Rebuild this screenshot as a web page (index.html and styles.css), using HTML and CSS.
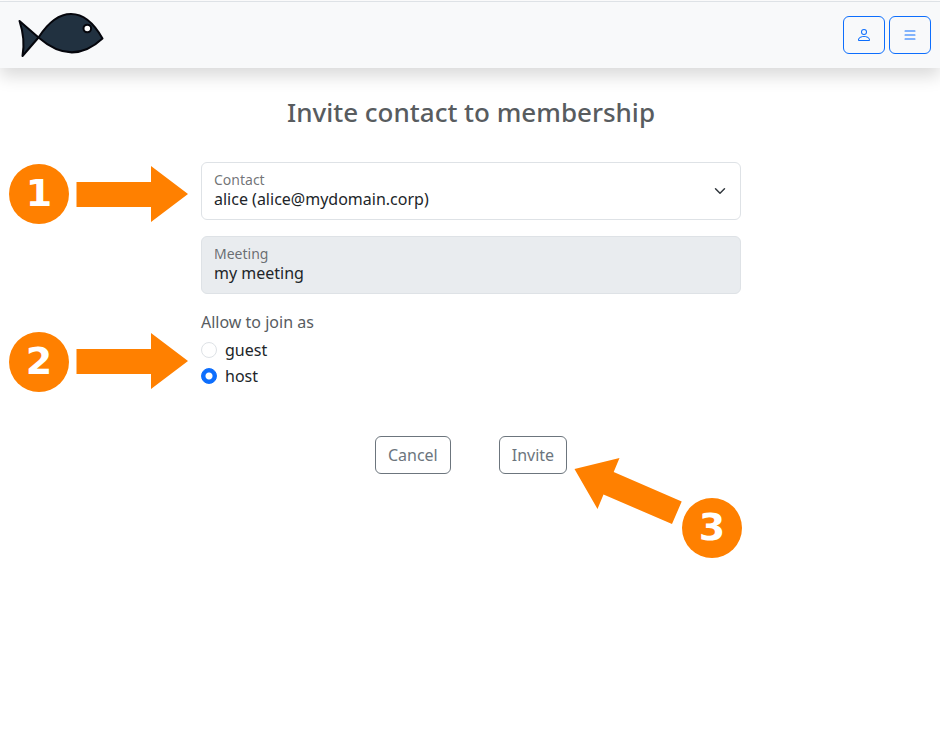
FILE: index.html
```html
<!DOCTYPE html>
<html lang="en">
<head>
<meta charset="utf-8">
<meta name="viewport" content="width=device-width, initial-scale=1">
<title>Invite contact to membership</title>
<link rel="stylesheet" href="styles.css">
</head>
<body>
<header class="navbar">
  <a class="brand" href="#" aria-label="Home">
    <svg width="88" height="48" viewBox="0 0 88 48" fill="#213140" stroke="#05060c" stroke-width="2" stroke-linejoin="round" aria-hidden="true">
      <path d="M2.500 11 21.500 27.500 5.500 46Q8.500 29 2.500 11Z"/>
      <path d="M21.500 27.500C41.500-3.500 67-4.500 85.500 28.500C65.500 47 44.500 47.500 21.500 27.500Z"/>
      <circle cx="70.300" cy="18.500" r="3.800" fill="#fff"/>
    </svg>
  </a>
  <div class="nav-actions">
    <button class="btn btn-primary" type="button" aria-label="Account">
      <svg width="16" height="16" viewBox="0 0 16 16" fill="currentColor" aria-hidden="true"><path d="M8 8a3 3 0 1 0 0-6 3 3 0 0 0 0 6m2-3a2 2 0 1 1-4 0 2 2 0 0 1 4 0m4 8c0 1-1 1-1 1H3s-1 0-1-1 1-4 6-4 6 3 6 4m-1-.004c-.001-.246-.154-.986-.832-1.664C11.516 10.680 10.289 10 8 10s-3.516.68-4.168 1.332c-.678.678-.83 1.418-.832 1.664z"/></svg>
    </button>
    <button class="btn btn-primary" type="button" aria-label="Menu">
      <svg width="16" height="16" viewBox="0 0 16 16" fill="currentColor" aria-hidden="true"><path fill-rule="evenodd" d="M2.500 12a.5.5 0 0 1 .5-.5h10a.5.5 0 0 1 0 1H3a.5.5 0 0 1-.5-.5m0-4a.5.5 0 0 1 .5-.5h10a.5.5 0 0 1 0 1H3a.5.5 0 0 1-.5-.5m0-4a.5.5 0 0 1 .5-.5h10a.5.5 0 0 1 0 1H3a.5.5 0 0 1-.5-.5"/></svg>
    </button>
  </div>
</header>
<main class="page">
  <h1 class="title">Invite contact to membership</h1>
  <form class="form">
    <div class="field">
      <select class="control select" id="contact">
        <option>alice (alice@mydomain.corp)</option>
      </select>
      <label class="field-label" for="contact">Contact</label>
      <div class="callout callout-right callout-contact">
        <span class="step">1</span>
        <svg width="112" height="56" viewBox="0 0 112 56" fill="#ff8000" aria-hidden="true"><path d="M.5 16H75V0L112 28 75 56V41H.5Z"/></svg>
      </div>
    </div>
    <div class="field">
      <input class="control" id="meeting" type="text" value="my meeting" disabled>
      <label class="field-label" for="meeting">Meeting</label>
    </div>
    <fieldset class="roles">
      <legend class="legend">Allow to join as</legend>
      <div class="check">
        <input class="radio" type="radio" name="role" id="guest">
        <label for="guest">guest</label>
      </div>
      <div class="check">
        <input class="radio" type="radio" name="role" id="host" checked>
        <label for="host">host</label>
      </div>
      <div class="callout callout-right callout-roles">
        <span class="step">2</span>
        <svg class="arrow" width="112" height="56" viewBox="0 0 112 56" fill="#ff8000" aria-hidden="true"><path d="M.5 15H75V-1L112 27 75 55V40H.5Z"/></svg>
      </div>
    </fieldset>
    <div class="actions">
      <button class="btn btn-secondary" type="button">Cancel</button>
      <button class="btn btn-secondary" type="submit">Invite</button>
      <div class="callout callout-invite">
        <svg width="108" height="68" viewBox="0 0 108 68" fill="#ff8000" aria-hidden="true"><path d="M.5 11 45.500 0 39.700 14 107.700 43.500 98 66 29.500 36.500 23.500 51Z"/></svg>
        <span class="step">3</span>
      </div>
    </div>
  </form>
</main>
</body>
</html>
```
FILE: styles.css
```css
*,
*::before,
*::after {
  box-sizing: border-box;
}

body {
  min-height: 100vh;
  margin: 0;
  padding-top: 1px;
  background: #fff;
  color: #212529;
  font-family: "Noto Sans", "Liberation Sans", sans-serif;
  font-size: 16px;
  line-height: 24px;
}

.navbar {
  display: flex;
  align-items: center;
  justify-content: space-between;
  padding: 8px 9px 8px 17px;
  border-top: 1px solid #dee2e6;
  background: #f8f9fa;
  box-shadow: 0 8px 16px rgba(0, 0, 0, 0.15);
}

.brand {
  display: flex;
  height: 50px;
}

.nav-actions {
  display: flex;
  gap: 4px;
}

.btn {
  padding: 6px 12px;
  border: 1px solid;
  border-radius: 6px;
  background: transparent;
  font: inherit;
  cursor: pointer;
}

.btn-primary {
  display: flex;
  align-items: center;
  height: 38px;
  color: #0d6efd;
}

.btn-secondary {
  color: #6c757d;
}

.page {
  padding: 28px 0 24px 2px;
}

.title {
  margin: 0 0 34px;
  color: #585c5f;
  font-size: 26px;
  font-weight: 500;
  line-height: 32px;
  text-align: center;
}

.form {
  max-width: 540px;
  margin: 0 auto;
}

.field {
  position: relative;
  margin-bottom: 16px;
}

.control {
  display: block;
  width: 100%;
  height: 58px;
  padding: 26px 12px 10px;
  border: 1px solid #dee2e6;
  border-radius: 6px;
  background-color: #fff;
  color: #212529;
  font: inherit;
  line-height: 20px;
  appearance: none;
}

.control:disabled {
  background-color: #e9ecef;
  opacity: 1;
}

.select {
  background-image: url("data:image/svg+xml,%3csvg xmlns='http://www.w3.org/2000/svg' viewBox='0 0 16 16'%3e%3cpath fill='none' stroke='%23343a40' stroke-linecap='round' stroke-linejoin='round' stroke-width='2' d='m2 5 6 6 6-6'/%3e%3c/svg%3e");
  background-repeat: no-repeat;
  background-position: right 12px center;
  background-size: 16px 12px;
}

.field-label {
  position: absolute;
  top: 8px;
  left: 13px;
  color: rgba(33, 37, 41, 0.65);
  font-size: 14px;
  line-height: 20px;
  pointer-events: none;
}

.roles {
  position: relative;
  min-width: 0;
  margin: 0 0 46px;
  padding: 0;
  border: 0;
}

.legend {
  margin-bottom: 4px;
  padding: 0;
  color: #585c5f;
}

.check {
  display: flex;
  align-items: center;
  gap: 8px;
  margin-bottom: 2px;
}

.radio {
  width: 16px;
  height: 16px;
  margin: 0;
  border: 1px solid #dee2e6;
  border-radius: 50%;
  background: #fff;
  appearance: none;
}

.radio:checked {
  border-color: #0d6efd;
  background: radial-gradient(circle, #fff 3px, #0d6efd 4px);
}

.actions {
  position: relative;
  display: flex;
  justify-content: center;
  gap: 48px;
}

/* Numbered step markers laid over the form */
.callout {
  position: absolute;
  display: flex;
  pointer-events: none;
}

.callout-right {
  right: 100%;
  align-items: center;
  gap: 7px;
  margin-right: 13px;
}

.callout-contact {
  top: 2px;
}

.callout-roles {
  top: -6px;
}

.callout-invite {
  top: 22px;
  left: 373px;
}

.callout-invite .step {
  margin-top: 40px;
}

.arrow {
  overflow: visible;
}

.step {
  width: 60px;
  height: 60px;
  border-radius: 50%;
  background: #ff8000;
  color: #fff;
  font-family: "DejaVu Sans", sans-serif;
  font-size: 38px;
  font-weight: 700;
  line-height: 58px;
  text-align: center;
}
```
